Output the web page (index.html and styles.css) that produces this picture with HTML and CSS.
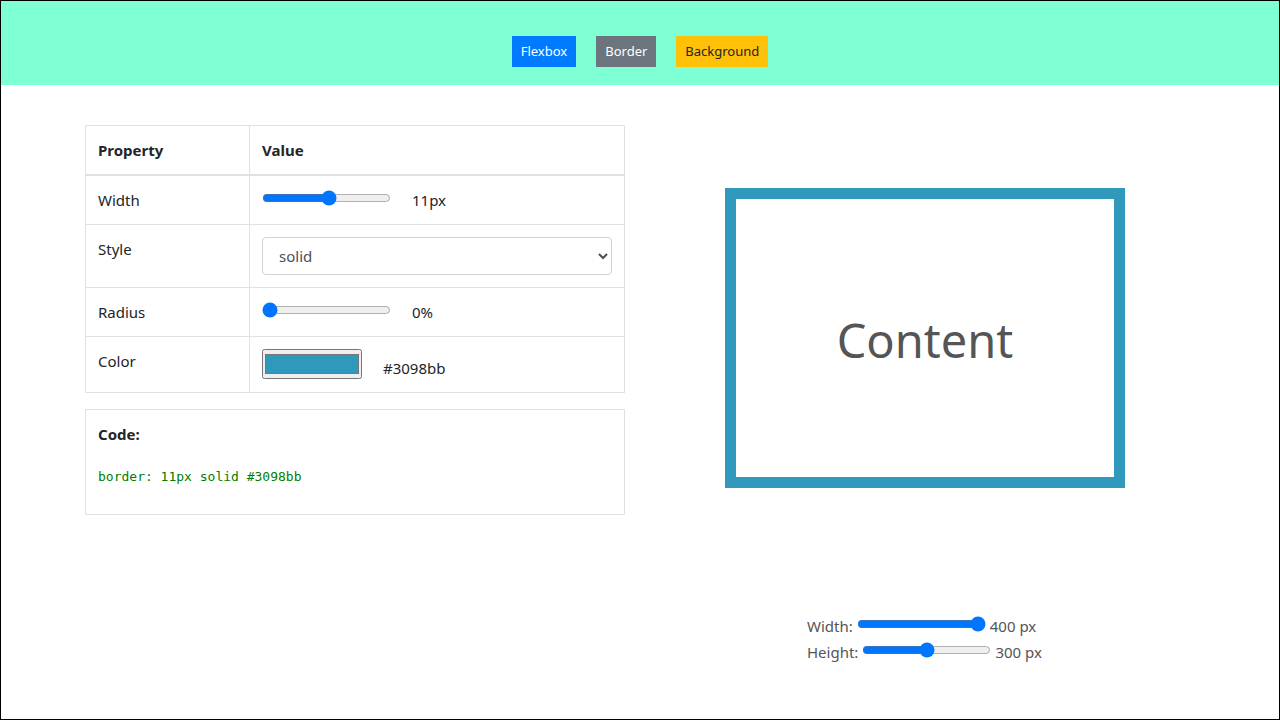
FILE: index.html
```html
<!DOCTYPE html>
<html lang="en">
<head>
<meta charset="utf-8">
<title>Border</title>
<link rel="stylesheet" href="styles.css">
</head>
<body>
<div class="page">
  <header class="topbar">
    <button class="btn btn-primary" type="button">Flexbox</button>
    <button class="btn btn-secondary" type="button">Border</button>
    <button class="btn btn-warning" type="button">Background</button>
  </header>
  <main class="container">
    <section class="controls">
      <table class="props">
        <thead>
          <tr><th class="name">Property</th><th>Value</th></tr>
        </thead>
        <tbody>
          <tr>
            <td><label for="bw">Width</label></td>
            <td><div class="line"><input class="range" id="bw" type="range" min="1" max="20" value="11"><output for="bw">11px</output></div></td>
          </tr>
          <tr>
            <td><label for="bs">Style</label></td>
            <td><select class="select" id="bs"><option>solid</option><option>dashed</option><option>dotted</option></select></td>
          </tr>
          <tr>
            <td><label for="br">Radius</label></td>
            <td><div class="line"><input class="range" id="br" type="range" min="0" max="50" value="0"><output for="br">0%</output></div></td>
          </tr>
          <tr>
            <td><label for="bc">Color</label></td>
            <td><div class="line line-color"><input class="color" id="bc" type="color" value="#3098bb"><output for="bc">#3098bb</output></div></td>
          </tr>
        </tbody>
      </table>
      <div class="code-box">
        <strong>Code:</strong>
        <pre class="code">border: 11px solid #3098bb</pre>
      </div>
    </section>
    <section class="preview">
      <div class="stage"><div class="box">Content</div></div>
      <div class="sizes">
        <div class="size"><label for="pw">Width:</label><input class="range" id="pw" type="range" min="0" max="400" value="400"><output for="pw">400 px</output></div>
        <div class="size"><label for="ph">Height:</label><input class="range" id="ph" type="range" min="0" max="600" value="300"><output for="ph">300 px</output></div>
      </div>
    </section>
  </main>
</div>
</body>
</html>
```
FILE: styles.css
```css
* { box-sizing: border-box; }
body {
  margin: 0;
  font: 15px/24px "Segoe UI", "Noto Sans", "Open Sans", sans-serif;
  color: #212529;
  background: #fff;
}
.page { min-height: 100vh; border: 1px solid #000; }
.topbar {
  display: flex;
  justify-content: center;
  gap: 20px;
  padding: 35px 0 18px;
  background: #7fffd4;
}
.btn {
  font: 13px/21px "Segoe UI", "Noto Sans", "Open Sans", sans-serif;
  padding: 4px 8px;
  border: 1px solid;
}
.btn-primary { background: #007bff; border-color: #007bff; color: #fff; }
.btn-secondary { background: #6c757d; border-color: #6c757d; color: #fff; }
.btn-warning { background: #ffc107; border-color: #ffc107; color: #212529; }
.container {
  display: grid;
  grid-template-columns: 1fr 1fr;
  gap: 30px;
  max-width: 1140px;
  margin: 0 auto;
  padding: 40px 15px 0;
}
.props { width: 100%; border-collapse: collapse; margin-bottom: 16px; }
.props th, .props td {
  border: 1px solid #dee2e6;
  padding: 12px;
  text-align: left;
  vertical-align: top;
}
.props th { border-bottom-width: 2px; }
.props .name { width: 164px; }
.line { display: flex; align-items: flex-start; gap: 21px; }
.line-color { align-items: flex-end; height: 31px; }
.range { width: 129px; height: 16px; margin: 2px 0; accent-color: #0075ff; }
.select {
  display: block;
  width: 100%;
  height: 38px;
  padding: 6px 12px;
  font: inherit;
  color: #495057;
  background: #fff;
  border: 1px solid #ced4da;
  border-radius: 4px;
}
.color { width: 100px; height: 30px; align-self: flex-start; }
.color::-webkit-color-swatch-wrapper { padding: 3px 0; }
.code-box { border: 1px solid #dee2e6; padding: 12px; }
.code {
  margin: 20px 0 15px;
  font: 13px/21px "Consolas", "DejaVu Sans Mono", monospace;
  color: #008000;
}
.preview { color: #555; }
.stage { display: flex; align-items: center; justify-content: center; height: 426px; }
.box {
  display: flex;
  align-items: center;
  justify-content: center;
  width: 400px;
  height: 300px;
  padding-top: 4px;
  border: 11px solid #3098bb;
  font-size: 47px;
}
.sizes { width: 236px; margin: 63px auto 0; }
.size { display: flex; gap: 4px; height: 26px; white-space: nowrap; }
```
